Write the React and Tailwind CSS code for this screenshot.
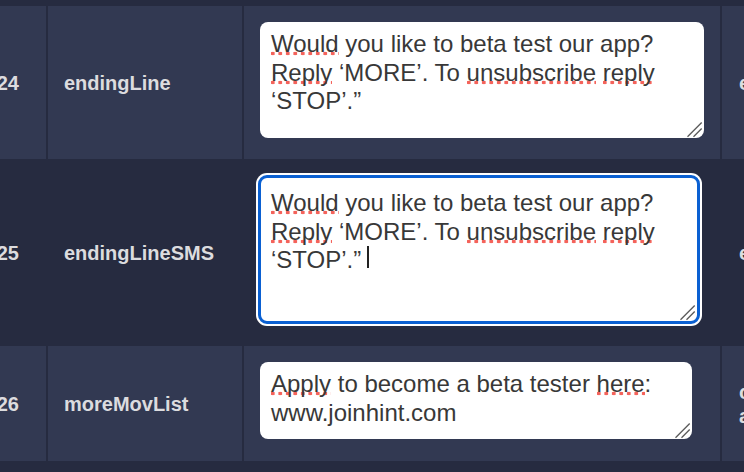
import React from "react";

const spell =
  "bg-[image:radial-gradient(circle,#f4625a_1.7px,transparent_2.1px)] bg-[length:7.5px_7px] bg-[position:-2px_100%] bg-repeat-x";

const Grip = () => (
  <svg
    className="absolute right-0 bottom-0 w-[18px] h-[18px]"
    viewBox="0 0 18 18"
    fill="none"
  >
    <path d="M1.5 16.7L15.7 2.5M7.5 16.7L15.7 8.5" stroke="#5a5a5a" strokeWidth="1.3" />
  </svg>
);

const Label = ({ children }) => (
  <div className="w-[194px] shrink-0 pl-[16px] flex items-center text-[20px] font-bold text-[#dcdcdf]">
    {children}
  </div>
);

const Num = ({ children }) => (
  <div className="w-[46px] shrink-0 flex items-center justify-end pr-[27px] text-[20px] font-bold text-[#dcdcdf]">
    {children}
  </div>
);

const Side = ({ children }) => (
  <div className="w-[200px] shrink-0 pl-[17px] flex items-center text-[20px] leading-[24px] font-bold text-[#dcdcdf] whitespace-nowrap">
    {children}
  </div>
);

export default function App() {
  return (
    <div className="w-[744px] h-[472px] overflow-hidden bg-[#262b40] pt-[6px] font-['Liberation_Sans',Arial,sans-serif]">
      {/* row 24 */}
      <div className="h-[153px] flex gap-[2px] [&>div]:bg-[#323952]">
        <Num>24</Num>
        <Label>endingLine</Label>
        <div className="w-[476px] shrink-0 pl-[16px] pt-[16px]">
          <div className="relative w-[444px] h-[116px] rounded-[8px] bg-white pl-[11px] pt-[8px] text-[24px] leading-[28.5px] text-[#383838] whitespace-nowrap">
            <span className={spell}>Would</span> you like to beta test our app?
            <br />
            <span className={spell}>Reply</span> ‘MORE’. To <span className={spell}>unsubscribe</span>{" "}
            <span className={spell}>reply</span>
            <br />
            ‘STOP’.”
            <Grip />
          </div>
        </div>
        <Side>endingLine</Side>
      </div>

      {/* row 25, focused */}
      <div className="h-[187px] flex gap-[2px]">
        <Num>25</Num>
        <Label>endingLineSMS</Label>
        <div className="w-[476px] shrink-0 pl-[16px] pt-[16px]">
          <div className="relative ml-[-2px] w-[442px] h-[149px] rounded-[9px] border-[3px] border-[#0a60d2] ring-2 ring-white bg-white pl-[10px] pt-[11px] text-[24px] leading-[28.5px] text-[#383838] whitespace-nowrap">
            <span className={spell}>Would</span> you like to beta test our app?
            <br />
            <span className={spell}>Reply</span> ‘MORE’. To <span className={spell}>unsubscribe</span>{" "}
            <span className={spell}>reply</span>
            <br />
            ‘STOP’.”
            <span className="inline-block ml-[6px] w-[1.5px] h-[22px] bg-[#222]" />
            <Grip />
          </div>
        </div>
        <Side>endingLineSMS</Side>
      </div>

      {/* row 26 */}
      <div className="h-[115px] flex gap-[2px] [&>div]:bg-[#323952]">
        <Num>26</Num>
        <Label>moreMovList</Label>
        <div className="w-[476px] shrink-0 pl-[16px] pt-[16px]">
          <div className="relative w-[432px] h-[77px] rounded-[8px] bg-white pl-[11px] pt-[8px] text-[24px] leading-[28.5px] text-[#383838] whitespace-nowrap">
            <span className={spell}>Apply</span> to become a beta tester <span className={spell}>here</span>:
            <br />
            www.joinhint.com
            <Grip />
          </div>
        </div>
        <Side>
          <span>
            comma separated
            <br />
            and trimmed
          </span>
        </Side>
      </div>
    </div>
  );
}
